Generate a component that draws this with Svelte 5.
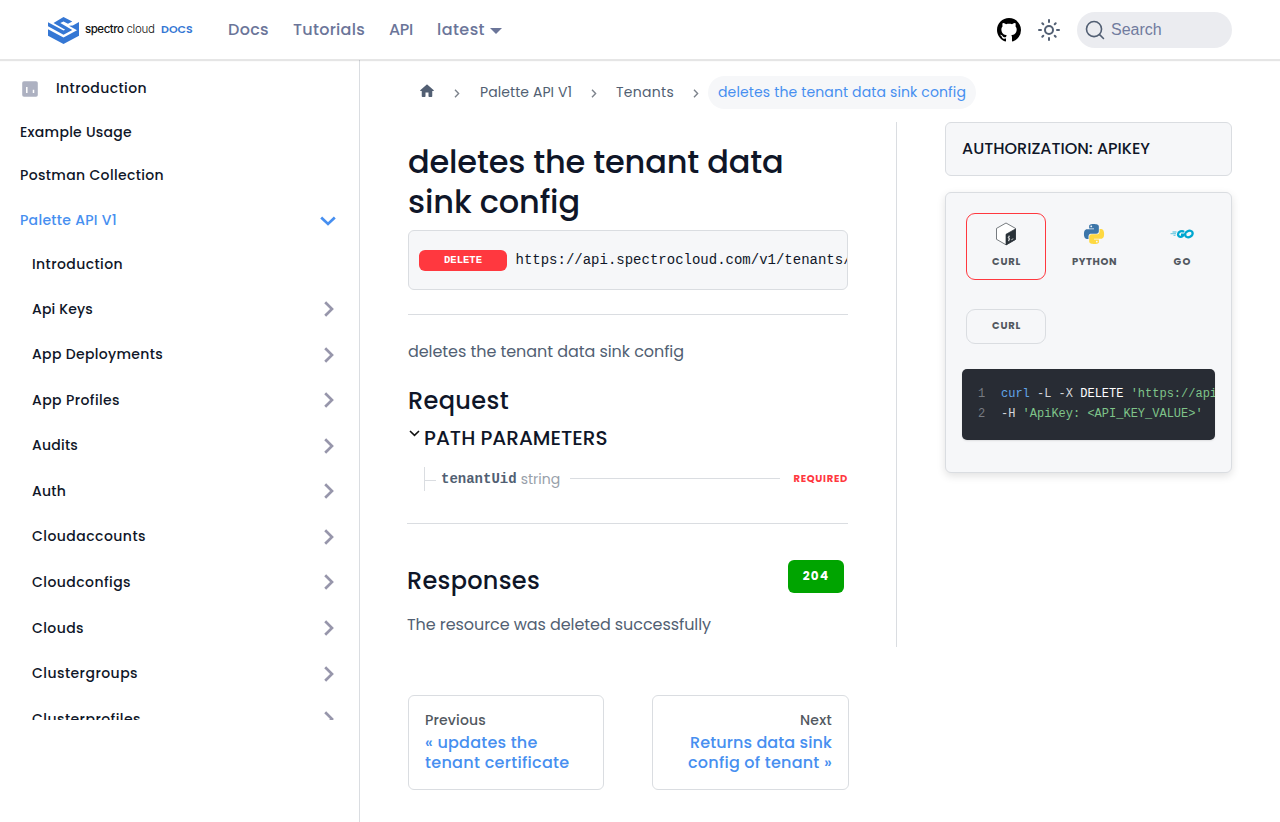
<script>
  // Spreads the letters of a label so that it fills the given width.
  function fit(node, width) {
    const apply = () => {
      node.style.letterSpacing = '0px';
      const natural = node.getBoundingClientRect().width;
      node.style.letterSpacing = (width - natural) / node.textContent.length + 'px';
    };
    apply();
    document.fonts?.ready.then(apply);
  }

  const nav = [['Docs', 41], ['Tutorials', 72], ['API', 24]];
  const top = [['Example Usage', 112], ['Postman Collection', 144]];
  const groups = [
    ['Api Keys', 61], ['App Deployments', 131], ['App Profiles', 88], ['Audits', 46],
    ['Auth', 34], ['Cloudaccounts', 114], ['Cloudconfigs', 99], ['Clouds', 52],
    ['Clustergroups', 106], ['Clusterprofiles', 109]
  ];
</script>

{#snippet chevron()}
  <svg class="chev" width="10" height="16" viewBox="0 0 10 16"><path d="M1.200 1.200 8 8l-6.800 6.800" fill="none" stroke="#9796ab" stroke-width="2.700" /></svg>
{/snippet}
{#snippet sep()}
  <svg class="sep" width="6" height="9" viewBox="0 0 6 9"><path d="M1 .8 4.600 4.500 1 8.200" fill="none" stroke="#7d838c" stroke-width="1.400" /></svg>
{/snippet}

<header>
  <svg class="mark" width="31" height="27" viewBox="0 0 31 27">
    <g fill="#3577d4">
      <path d="M15.500 0 24.300 4.600 20 6.800 15.500 4.400 12.300 6.100 24.300 12.900 15.500 17.700 0 9.300V5.300L15.500 13.600 17.200 12.700 5.500 6Z" />
      <path d="M31 5V18.800L15.500 27 0 18.800V16.500L0 12.200 15.500 20.600 29 13.200 21 8.800 24.800 8.600Z" />
    </g>
    <path d="M0 14.300 15.500 22.700 28 16" fill="none" stroke="#3577d4" stroke-width="1" />
  </svg>
  <span class="brand"><span use:fit={38.500}>spectro</span><span class="thin" use:fit={28}>cloud</span></span>
  <span class="docs" use:fit={33}>DOCS</span>
  <nav>
    {#each nav as [label, w]}<span use:fit={w}>{label}</span>{/each}
    <span class="ver"><span use:fit={48}>latest</span><i></i></span>
  </nav>
  <svg class="gh" width="24" height="24" viewBox="0 0 16 16"><path d="M8 0C3.580 0 0 3.580 0 8c0 3.540 2.290 6.530 5.470 7.590.4.070.55-.17.55-.38 0-.19-.01-.82-.01-1.490-2.010.37-2.530-.49-2.690-.94-.09-.23-.48-.94-.82-1.130-.28-.15-.68-.52-.01-.53.63-.01 1.080.58 1.230.82.72 1.210 1.870.87 2.330.66.07-.52.28-.87.51-1.070-1.780-.2-3.640-.89-3.640-3.950 0-.87.31-1.590.82-2.150-.08-.2-.36-1.020.08-2.120 0 0 .67-.21 2.200.82.64-.18 1.320-.27 2-.27s1.360.09 2 .27c1.530-1.040 2.200-.82 2.200-.82.44 1.100.16 1.920.08 2.120.51.56.82 1.270.82 2.150 0 3.070-1.870 3.750-3.650 3.950.29.25.54.73.54 1.480 0 1.070-.01 1.930-.01 2.200 0 .21.15.46.55.38A8.010 8.010 0 0 0 16 8c0-4.420-3.580-8-8-8z" /></svg>
  <svg class="sun" width="24" height="24" viewBox="0 0 24 24" fill="none" stroke="#525f73" stroke-width="2" stroke-linecap="round"><circle cx="12" cy="12" r="4" /><path d="M12 2v2M12 20v2M2 12h2M20 12h2M5.300 5.300l1 1M17.700 17.700l1 1M5.300 18.700l1-1M17.700 6.300l1-1" /></svg>
  <div class="search">
    <svg width="20" height="20" viewBox="0 0 20 20"><path d="M14.386 14.386l4.088 4.088-4.088-4.088A7.533 7.533 0 1 1 3.733 3.733a7.533 7.533 0 0 1 10.653 10.653z" stroke="#525f73" fill="none" stroke-width="1.600" stroke-linecap="round" stroke-linejoin="round" /></svg>
    <span>Search</span>
  </div>
</header>

<div class="body">
  <aside>
    <div class="menu">
      <div class="row first">
        <svg width="16" height="16" viewBox="0 0 16 16"><rect x=".2" y=".2" width="15.600" height="15.600" rx="1.800" fill="#adb1c1" /><path d="M4.800 6v6M11.500 8.800V12" stroke="#fff" stroke-width="1.500" /></svg>
        <span use:fit={91}>Introduction</span>
      </div>
      {#each top as [label, w]}<div class="row"><span use:fit={w}>{label}</span></div>{/each}
      <div class="row cat on"><span use:fit={97}>Palette API V1</span>
        <svg width="16" height="10" viewBox="0 0 16 10"><path d="M1.200 1.500 8 8l6.800-6.500" fill="none" stroke="#478ff0" stroke-width="2.700" /></svg>
      </div>
      <div class="row sub"><span use:fit={91}>Introduction</span></div>
      {#each groups as [label, w]}
        <div class="row sub cat"><span use:fit={w}>{label}</span>{@render chevron()}</div>
      {/each}
    </div>
  </aside>

  <main>
    <div class="crumbs">
      <svg class="home" width="18" height="18" viewBox="0 0 24 24"><path d="M10 19v-5h4v5c0 .55.450 1 1 1h3c.55 0 1-.45 1-1v-7h1.700c.46 0 .68-.57.33-.87L12.670 3.600c-.38-.34-.96-.34-1.340 0l-8.360 7.530c-.34.300-.13.870.33.870H5v7c0 .55.450 1 1 1h3c.55 0 1-.45 1-1z" fill="#525f73" /></svg>
      {@render sep()}
      <span class="c1"><span use:fit={92}>Palette API V1</span></span>
      {@render sep()}
      <span class="c2"><span use:fit={58}>Tenants</span></span>
      {@render sep()}
      <span class="pill"><span use:fit={248}>deletes the tenant data sink config</span></span>
    </div>

    <div class="cols">
      <article>
        <h1><span use:fit={375.500}>deletes the tenant data</span><br /><span use:fit={172}>sink config</span></h1>
        <div class="url"><b><span use:fit={38}>DELETE</span></b><code>https://api.spectrocloud.com/v1/tenants/</code></div>
        <hr />
        <p><span use:fit={276}>deletes the tenant data sink config</span></p>
        <h2 class="req"><span use:fit={101}>Request</span></h2>
        <h3><svg width="11" height="7" viewBox="0 0 11 7"><path d="M1 1l4.500 4.400L10 1" fill="none" stroke="#111" stroke-width="1.600" /></svg><span use:fit={183.500}>PATH PARAMETERS</span></h3>
        <div class="param"><i class="tick"></i><code>tenantUid</code><em><span use:fit={39.500}>string</span></em><i class="line"></i><strong><span use:fit={54.500}>REQUIRED</span></strong></div>
        <hr class="wide" />
        <div class="resp"><h2><span use:fit={133}>Responses</span></h2><b><span use:fit={26.500}>204</span></b></div>
        <p class="res"><span use:fit={304}>The resource was deleted successfully</span></p>
      </article>

      <section>
        <div class="auth"><span use:fit={188}>AUTHORIZATION: APIKEY</span></div>
        <div class="card">
          <div class="tabs">
            <div class="tab sel">
              <svg width="22" height="24" viewBox="0 0 22 24"><path d="M11 1 1.500 6.400v10.900L11 22.800l9.500-5.500V6.400z" fill="#fff" stroke="#555c61" stroke-width=".8" /><path d="M11 12.300 20.500 6.900v10.600L11 23z" fill="#293138" stroke="#293138" stroke-width=".7" stroke-linejoin="round" /><path d="M14.800 14.200c-1.600.2-2 1.800-.8 2s.8 2.200-.9 2.300M13.900 13.600v5.700M16.300 17.800l2-1.100" fill="none" stroke="#fff" stroke-width=".7" /></svg>
              <span use:fit={29}>CURL</span>
            </div>
            <div class="tab">
              <svg width="20" height="24" viewBox="0 -2.400 24 28.800"><path fill="#3c76a9" d="M14.250.18l.9.2.73.26.59.3.45.32.34.34.25.34.16.33.1.3.04.26.02.2-.01.13V8.500l-.05.63-.13.55-.21.46-.26.38-.3.31-.33.25-.35.19-.35.14-.33.1-.3.07-.26.04-.21.02H8.770l-.69.05-.59.14-.5.22-.41.27-.33.32-.27.35-.2.36-.15.37-.1.35-.07.32-.04.27-.02.21v3.060H3.170l-.21-.03-.28-.07-.32-.12-.35-.18-.36-.26-.36-.36-.35-.46-.32-.59-.28-.73-.21-.88-.14-1.050-.05-1.230.06-1.220.16-1.040.24-.87.32-.71.36-.57.4-.44.42-.33.42-.24.4-.16.36-.1.32-.05.24-.01h.16l.06.01h8.160v-.83H6.180l-.01-2.750-.02-.37.05-.34.11-.31.17-.28.25-.26.31-.23.38-.2.44-.18.51-.15.58-.12.64-.1.71-.06.77-.04.84-.02 1.270.05zm-6.300 1.980l-.23.33-.08.41.08.41.23.34.33.22.41.09.41-.09.33-.22.23-.34.08-.41-.08-.41-.23-.33-.33-.22-.41-.09-.41.09z" /><path fill="#fed942" d="M21.100 6.110l.28.06.32.12.35.18.36.27.36.35.35.47.32.59.28.73.21.88.14 1.040.05 1.230-.06 1.230-.16 1.040-.24.86-.32.71-.36.57-.4.45-.42.33-.42.24-.4.16-.36.09-.32.05-.24.02-.16-.01h-8.220v.82h5.840l.01 2.760.02.36-.05.34-.11.31-.17.29-.25.25-.31.24-.38.2-.44.17-.51.15-.58.13-.64.09-.71.07-.77.04-.84.01-1.270-.04-1.070-.14-.9-.2-.73-.25-.59-.3-.45-.33-.34-.34-.25-.34-.16-.33-.1-.3-.04-.25-.02-.2.01-.13v-5.340l.05-.64.13-.54.21-.46.26-.38.3-.32.33-.24.35-.2.35-.14.33-.1.3-.06.26-.04.21-.02.13-.01h5.840l.69-.05.59-.14.5-.21.41-.28.33-.32.27-.35.2-.36.15-.36.1-.35.07-.32.04-.28.02-.21V6.070h2.090l.14.01zm-6.470 14.250l-.23.33-.08.41.08.41.23.33.33.23.41.08.41-.08.33-.23.23-.33.08-.41-.08-.41-.23-.33-.33-.23-.41-.08-.41.08z" /></svg>
              <span use:fit={45}>PYTHON</span>
            </div>
            <div class="tab">
              <svg width="24" height="24" viewBox="0 0 24 24" fill="none" stroke="#00a7d0"><path d="M2.500 10h4M.5 11.700h5.500M3.500 13.400h2" stroke-width="1.300" opacity=".5" /><path d="M14.100 9.800c-2-1.600-5.900-.4-6.100 2.600-.1 3.200 4.900 3.100 5.600.2h-2.600" stroke-width="2.300" /><ellipse cx="18.900" cy="12" rx="3.900" ry="3.100" transform="rotate(-25 18.900 12)" stroke-width="2.300" /></svg>
              <span use:fit={18}>GO</span>
            </div>
          </div>
          <div class="variant"><span use:fit={29}>CURL</span></div>
          <pre><u>1</u><span class="fn">curl</span> -L -X <span class="w">DELETE</span> <span class="s">'https://api.spectrocloud.com'</span>
<u>2</u>-H <span class="s">'ApiKey: &lt;API_KEY_VALUE>'</span></pre>
        </div>
      </section>
    </div>

    <div class="pages">
      <div><small><span use:fit={61}>Previous</span></small><span use:fit={112.500}>« updates the</span><br /><span use:fit={144.500}>tenant certificate</span></div>
      <div class="next"><small><span use:fit={32}>Next</span></small><span use:fit={142}>Returns data sink</span><br /><span use:fit={144}>config of tenant »</span></div>
    </div>
  </main>
</div>

<style>
  :global(body) { background: #fff; overflow: hidden; }
  :global(#app) { font-family: Poppins, Inter, sans-serif; font-feature-settings: "cv11"; color: #0f1628; }
  span { white-space: nowrap; display: inline-block; }
  svg { display: block; flex: none; overflow: visible; }
  header { height: 59px; box-sizing: border-box; padding: 0 48px; display: flex; align-items: center; box-shadow: 0 1px 0 #e6e6e6, 0 2px 1px rgba(0,0,0,.1); position: relative; }
  .mark { margin-top: 1px; }
  .brand { display: flex; gap: 3px; margin-left: 6px; width: 70px; font: 500 11.500px/16px Inter, sans-serif; color: #111; margin-top: -2px; }
  .thin { font-weight: 300; }
  .docs { font-size: 11px; font-weight: 600; color: #3577d4; margin: -2px 0 0 6px; line-height: 16px; width: 33px; }
  nav { display: flex; gap: 24px; margin-left: 34px; font-size: 16px; font-weight: 500; color: #6b7599; line-height: 24px; }
  .ver { display: flex; align-items: center; }
  .ver i { border: 6.400px solid transparent; border-top-color: #6b7599; border-bottom: 0; margin: 3px 0 0 5px; }
  .gh { margin: 1px 0 0 auto; }
  .sun { margin: 1px 16px 0; }
  .search { width: 155px; height: 36px; border-radius: 18px; background: #ebecf0; box-sizing: border-box; padding-left: 8px; display: flex; align-items: center; font: 16px/20px "Liberation Sans", sans-serif; color: #717b9e; }
  .search span { margin-left: 6px; }
  .body { display: flex; height: 762px; margin-top: 1px; }
  aside { width: 360px; box-sizing: border-box; border-right: 1px solid #dadde1; flex: none; }
  .menu { height: 660px; overflow: hidden; padding-top: 6px; box-sizing: border-box; }
  .row { height: 43.500px; display: flex; align-items: center; padding: 0 24px 0 20px; font-size: 14px; font-weight: 500; line-height: 18px; }
  .row > svg { margin-top: 1px; }
  .first { height: 44px; gap: 18px; padding-left: 22px; }
  .first > svg { margin-top: 2px; }
  .cat { height: 45.540px; justify-content: space-between; }
  .row.on { color: #478ff0; padding-right: 23px; }
  .on > svg { margin-top: 3px; }
  .sub { padding-left: 32px; }
  .chev { margin-right: 1.500px; }
  main { flex: 1; padding: 16px 48px 0; }
  .crumbs { display: flex; height: 33px; align-items: center; font-size: 14px; color: #525f73; line-height: 18px; padding-left: 10px; }
  .home { margin: -3px 18px 0 0; }
  .crumbs .sep { margin-top: 1px; }
  .c1 { margin: -2px 19px 0 20px; width: 92px; }
  .c2 { margin: -2px 19px 0 19px; width: 58px; }
  .pill { background: #f6f7f9; border-radius: 17px; padding: 7px 10px 8px; margin-left: 9px; color: #478ff0; width: 248px; }
  .cols { display: flex; margin-top: 13px; height: 525px; }
  article { width: 440px; padding-right: 48px; border-right: 1px solid #dadde1; }
  h1, h2, h3, p { margin: 0; font-weight: 500; }
  h1 { font-size: 32px; line-height: 40px; padding-top: 20px; }
  .url { height: 60px; margin-top: 8px; box-sizing: border-box; border: 1px solid #dadde1; border-radius: 6px; background: #f6f7f9; padding-left: 10px; display: flex; align-items: center; overflow: hidden; font: 14px "Liberation Mono", monospace; }
  .url b { width: 88px; height: 21px; background: #ff383f; border-radius: 6px; color: #fff; font-size: 10.500px; line-height: 20px; text-align: center; flex: none; margin-right: 8.500px; }
  code { font: 14px/20px "Liberation Mono", monospace; }
  hr { border: 0; border-top: 1px solid #dadde1; margin: 24px 0 0; }
  p { font-size: 16px; font-weight: 400; line-height: 24px; color: #525f73; padding-top: 25px; }
  h2 { font-size: 24px; line-height: 30px; }
  .req { padding-top: 22px; }
  h3 { display: flex; font-size: 20px; line-height: 25px; margin-top: 10px; padding-left: 1px; }
  h3 svg { margin: 4px 4px 0 0; }
  .param { display: flex; align-items: center; height: 24px; margin: 16px 0 0 16px; border-left: 1px solid #dadde1; color: #525f73; }
  .tick { width: 11px; height: 1px; background: #dadde1; margin: 3px 5px 0 0; }
  .param code { font-weight: 700; }
  em { font-style: normal; font-size: 14px; color: #989faa; margin-left: 4px; line-height: 20px; }
  .line { flex: 1; height: 1px; background: #dadde1; margin: -1px 14px 0 9.500px; }
  strong { font-size: 10px; color: #ff383f; }
  .wide { margin: 32px 0 0 -1px; }
  .resp { display: flex; justify-content: space-between; margin: 36px 4px 0 -1px; }
  .resp h2 { padding-top: 6px; }
  .resp b { width: 56px; height: 33px; line-height: 32px; border-radius: 6px; background: #00a400; color: #fff; font-size: 12px; text-align: center; }
  .res { margin-left: -1px; padding-top: 17px; }
  section { margin-left: 48px; width: 287px; }
  .auth { height: 54px; box-sizing: border-box; border: 1px solid #dadde1; border-radius: 6px; background: #f6f7f9; padding: 0 16px; font-size: 16px; font-weight: 500; line-height: 52px; }
  .card { height: 281px; margin-top: 16px; box-sizing: border-box; border: 1px solid #dadde1; border-radius: 6px; background: #f6f7f9; padding: 20px 16px; box-shadow: 0 3px 8px rgba(0,0,0,.12); }
  .tabs { display: flex; gap: 8px; padding-left: 4px; width: 260px; }
  .tab { width: 80px; height: 67px; box-sizing: border-box; border: 1px solid transparent; border-radius: 9px; padding-top: 8px; display: flex; flex-direction: column; align-items: center; font-size: 10px; font-weight: 700; color: #525860; line-height: 14px; flex: none; }
  .tab span { margin: 9px 0 0 1px; }
  .sel { border-color: #ff383f; }
  .variant { width: 80px; height: 35px; box-sizing: border-box; border: 1px solid #dadde1; border-radius: 9px; margin: 29px 0 0 4px; text-align: center; font-size: 10px; font-weight: 700; line-height: 32px; color: #525860; }
  .variant span { margin-left: 1px; }
  pre { margin: 25px 0 0; height: 71px; width: 253px; box-sizing: border-box; background: #282c34; border-radius: 5px; padding: 15px 16px; font: 12px/20px "Liberation Mono", monospace; color: #d2d5db; overflow: hidden; box-shadow: 0 1px 2px rgba(0,0,0,.1); font-feature-settings: normal; }
  pre span { display: inline; white-space: pre; }
  u { text-decoration: none; display: inline-block; width: 23px; color: #777b82; }
  .fn { color: #61a5e8; }
  .w { color: #fff; }
  .s { color: #7fc48a; }
  .pages { display: grid; grid-template-columns: 196px 197px; gap: 48px; margin-top: 48px; }
  .pages > div { height: 95px; box-sizing: border-box; border: 1px solid #dadde1; border-radius: 6px; padding: 15px 16px; font-size: 16px; font-weight: 500; line-height: 20px; color: #478ff0; }
  small { display: block; font-size: 14px; line-height: 18px; margin-bottom: 4px; color: #525860; }
  .next { text-align: right; }
</style>
